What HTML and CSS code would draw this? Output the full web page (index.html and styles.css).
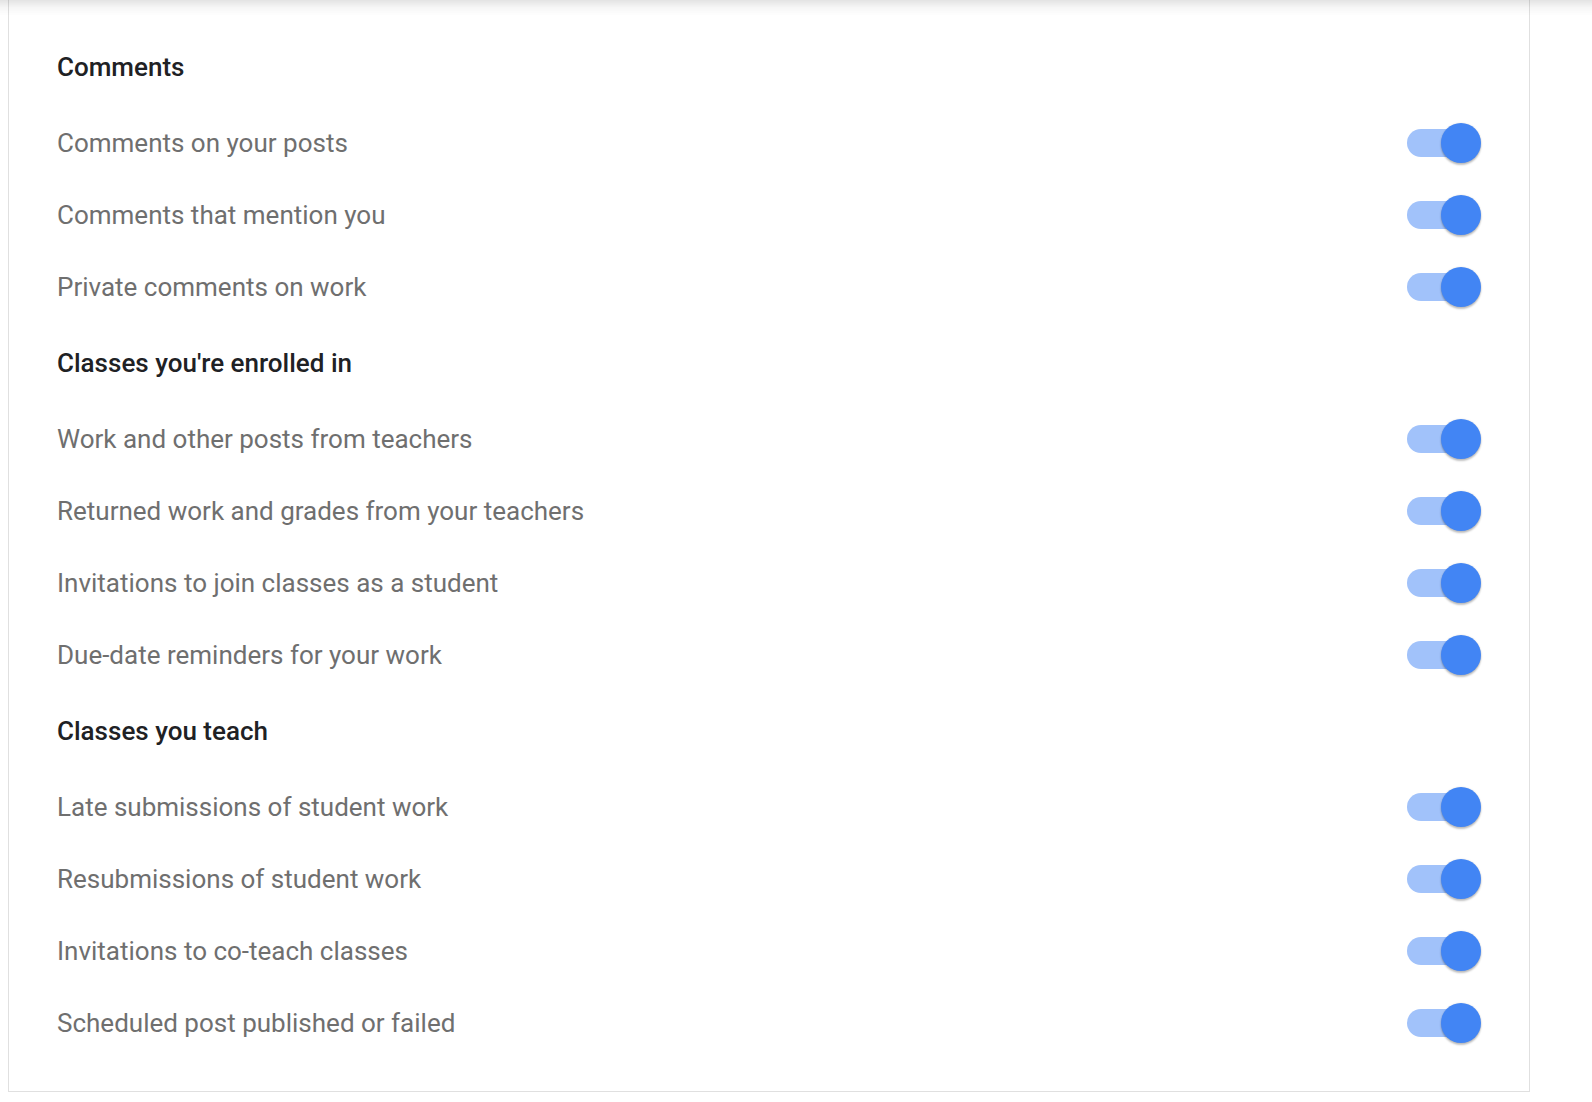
FILE: index.html
```html
<!DOCTYPE html>
<html>
<head>
<meta charset="utf-8">
<link rel="stylesheet" href="styles.css">
</head>
<body>
<div class="topshadow"></div>
<div class="card">
  <h2 class="heading">Comments</h2>
  <div class="row"><span class="label">Comments on your posts</span><span class="switch"><span class="track"></span><span class="thumb"></span></span></div>
  <div class="row"><span class="label">Comments that mention you</span><span class="switch"><span class="track"></span><span class="thumb"></span></span></div>
  <div class="row"><span class="label">Private comments on work</span><span class="switch"><span class="track"></span><span class="thumb"></span></span></div>
  <h2 class="heading">Classes you're enrolled in</h2>
  <div class="row"><span class="label">Work and other posts from teachers</span><span class="switch"><span class="track"></span><span class="thumb"></span></span></div>
  <div class="row"><span class="label">Returned work and grades from your teachers</span><span class="switch"><span class="track"></span><span class="thumb"></span></span></div>
  <div class="row"><span class="label">Invitations to join classes as a student</span><span class="switch"><span class="track"></span><span class="thumb"></span></span></div>
  <div class="row"><span class="label">Due-date reminders for your work</span><span class="switch"><span class="track"></span><span class="thumb"></span></span></div>
  <h2 class="heading">Classes you teach</h2>
  <div class="row"><span class="label">Late submissions of student work</span><span class="switch"><span class="track"></span><span class="thumb"></span></span></div>
  <div class="row"><span class="label">Resubmissions of student work</span><span class="switch"><span class="track"></span><span class="thumb"></span></span></div>
  <div class="row"><span class="label">Invitations to co-teach classes</span><span class="switch"><span class="track"></span><span class="thumb"></span></span></div>
  <div class="row"><span class="label">Scheduled post published or failed</span><span class="switch"><span class="track"></span><span class="thumb"></span></span></div>
</div>
</body>
</html>
```
FILE: styles.css
```css
html, body {
  margin: 0;
  padding: 0;
  background: #ffffff;
}
body {
  font-family: Roboto, "Liberation Sans", Arial, sans-serif;
  height: 1102px;
  overflow: hidden;
}
.topshadow {
  position: fixed;
  left: 0;
  top: 0;
  right: 0;
  height: 16px;
  background: linear-gradient(to bottom, rgba(0,0,0,0.11), rgba(0,0,0,0.03) 50%, rgba(0,0,0,0));
  z-index: 5;
}
.card {
  box-sizing: border-box;
  width: 1522px;
  margin-left: 8px;
  border-left: 1px solid #e0e0e0;
  border-right: 1px solid #e0e0e0;
  border-bottom: 1px solid #e0e0e0;
  padding: 27px 48px 32px 48px;
  display: flex;
  flex-direction: column;
}
.heading {
  margin: 0;
  height: 80px;
  display: flex;
  align-items: center;
  font-size: 26px;
  font-weight: 500;
  color: #202124;
}
.row {
  height: 72px;
  display: flex;
  align-items: center;
  justify-content: space-between;
}
.label {
  font-size: 26px;
  color: #6f6f6f;
}
.switch {
  position: relative;
  width: 74px;
  height: 40px;
  flex: none;
}
.track {
  position: absolute;
  left: 0;
  top: 6px;
  width: 72px;
  height: 28px;
  border-radius: 14px;
  background: #a1c2fa;
}
.thumb {
  position: absolute;
  right: 0;
  top: 0;
  width: 40px;
  height: 40px;
  border-radius: 50%;
  background: #4285f4;
  box-shadow: 0 2px 2px rgba(0,0,0,0.24), 0 0 2px rgba(0,0,0,0.12);
}
```
